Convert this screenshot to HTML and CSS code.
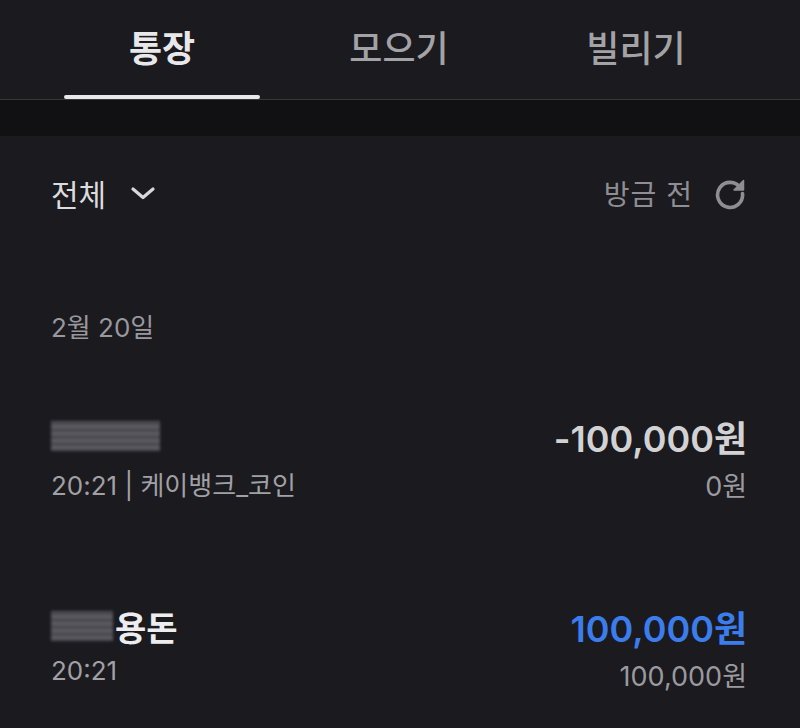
FILE: index.html
```html
<!DOCTYPE html>
<html lang="ko">
<head>
    <meta charset="UTF-8">
    <meta name="viewport" content="width=device-width, initial-scale=1.0">
    <title>통장</title>
    <link rel="stylesheet" href="styles.css">
</head>
<body>
    <div class="tabs">
        <div class="tab active">통장</div>
        <div class="tab">모으기</div>
        <div class="tab">빌리기</div>
    </div>
    <div class="band"></div>

    <div class="filter-row">
        <div class="filter">
            <span>전체</span>
            <svg class="chevron" width="26" height="16" viewBox="0 0 26 16">
                <path d="M3 4 L13 12.5 L23 4" fill="none" stroke="#d8d8dc" stroke-width="3.2" stroke-linecap="round" stroke-linejoin="round"/>
            </svg>
        </div>
        <div class="updated">
            <span>방금 전</span>
            <svg class="refresh" width="34" height="34" viewBox="0 0 34 34">
                <path d="M27.5 12 A12.5 12.5 0 1 0 29.5 17.5" fill="none" stroke="#8e8e93" stroke-width="3.6" stroke-linecap="round"/>
                <path d="M30.5 4.5 L30.5 14 L21 14 Z" fill="#8e8e93" stroke="#8e8e93" stroke-width="1.5" stroke-linejoin="round"/>
            </svg>
        </div>
    </div>

    <div class="date">2월 20일</div>

    <div class="tx">
        <div class="tx-left">
            <div class="tx-name"><span class="blur wide"></span></div>
            <div class="tx-meta">20:21 | 케이뱅크_코인</div>
        </div>
        <div class="tx-right">
            <div class="amount">-100,000원</div>
            <div class="balance">0원</div>
        </div>
    </div>

    <div class="tx">
        <div class="tx-left">
            <div class="tx-name"><span class="blur short"></span>용돈</div>
            <div class="tx-meta">20:21</div>
        </div>
        <div class="tx-right">
            <div class="amount plus">100,000원</div>
            <div class="balance">100,000원</div>
        </div>
    </div>
</body>
</html>
```

FILE: styles.css
```css
* {
    box-sizing: border-box;
}
body {
    margin: 0;
    background-color: #1a1a1f;
    font-family: Inter, "Noto Sans CJK KR", sans-serif;
    color: #e6e6e8;
}
.tabs {
    display: flex;
    height: 100px;
    padding-left: 64px;
    gap: 41px;
    border-bottom: 1px solid #36363b;
}
.tab {
    width: 196px;
    display: flex;
    justify-content: center;
    align-items: center;
    padding-bottom: 8px;
    font-size: 36px;
    font-weight: 500;
    color: #a2a2a7;
    position: relative;
}
.tab.active {
    color: #e8e8ea;
    font-weight: 700;
}
.tab.active::after {
    content: '';
    position: absolute;
    left: 0;
    right: 0;
    bottom: 0;
    height: 4px;
    border-radius: 2px;
    background: #e8e8ea;
}
.band {
    height: 36px;
    background-color: #111114;
}
.filter-row {
    height: 114px;
    display: flex;
    justify-content: space-between;
    align-items: center;
    padding: 0 53px 0 51px;
}
.filter {
    display: flex;
    align-items: center;
    gap: 24px;
    font-size: 30px;
    color: #dcdcdf;
}
.updated {
    display: flex;
    align-items: center;
    gap: 20px;
    font-size: 28px;
    color: #8e8e93;
    letter-spacing: 1px;
}
.date {
    padding: 57px 51px 0;
    height: 151px;
    font-size: 26px;
    color: #98989d;
}
.tx {
    display: flex;
    justify-content: space-between;
    align-items: flex-start;
    padding: 0 53px 0 51px;
    height: 190px;
}
.tx:last-child {
    height: auto;
    padding-bottom: 30px;
}
.tx-left, .tx-right {
    display: flex;
    flex-direction: column;
    gap: 6px;
    padding-top: 12px;
}
.tx-right {
    align-items: flex-end;
}
.tx-name {
    display: flex;
    align-items: center;
    height: 46px;
    font-size: 34px;
    font-weight: 600;
    color: #ededf0;
}
.blur {
    display: inline-block;
    height: 30px;
    background: repeating-linear-gradient(180deg, #5a5a5f 0px, #3e3e44 3px, #6a6a6f 5px, #48484d 7px);
    filter: blur(1.5px);
}
.blur.wide {
    width: 109px;
}
.blur.short {
    width: 62px;
    margin-right: 2px;
}
.tx-meta {
    font-size: 26px;
    color: #a0a0a5;
}
.amount {
    height: 46px;
    display: flex;
    align-items: center;
    font-size: 36px;
    font-weight: 600;
    color: #d2d2d5;
}
.amount.plus {
    color: #3b7ded;
}
.balance {
    font-size: 27px;
    color: #9a9a9f;
}
```
